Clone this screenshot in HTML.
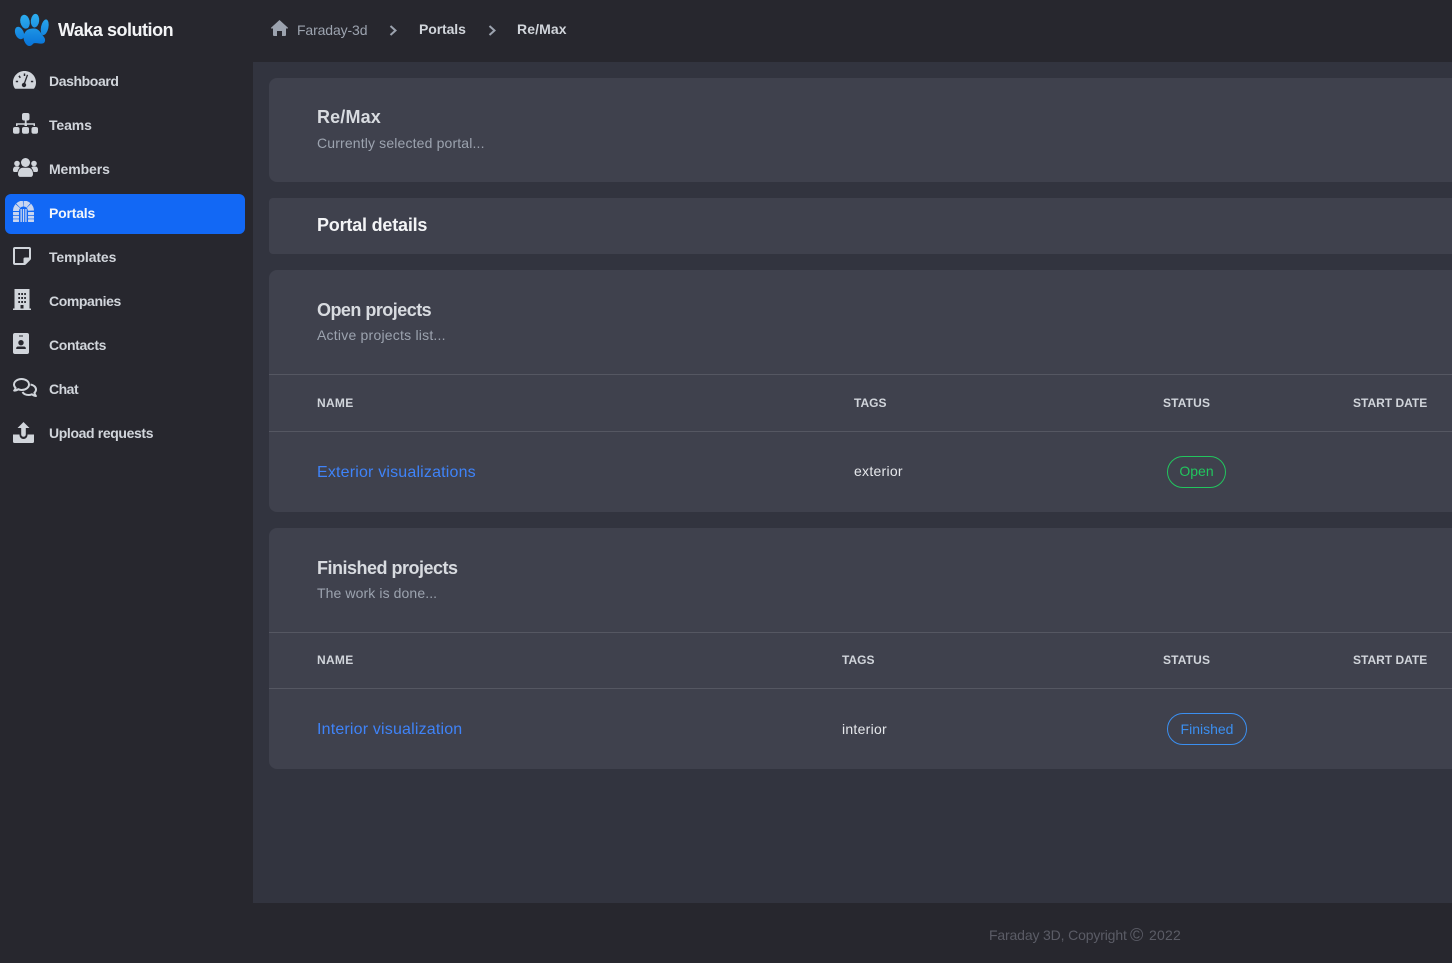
<!DOCTYPE html>
<html><head><meta charset="utf-8"><title>Waka solution</title>
<style>
html,body{margin:0;padding:0;background:#27272e;}
body{position:relative;width:1452px;height:963px;overflow:hidden;font-family:"Liberation Sans",Arial,sans-serif;color:#d1d5db;}
.a{position:absolute;white-space:nowrap;line-height:20px;}
.box{position:absolute;}
.card{position:absolute;left:269px;width:1183px;background:#3f414d;border-radius:8px 0 0 8px;}
.nav{font-size:14px;font-weight:700;left:49px;color:#d1d5db;}
.h{font-size:18px;font-weight:700;left:317px;color:#d8dbe0;}
.sub{font-size:14px;left:317px;color:#9ca3af;}
.th{font-size:12px;font-weight:700;color:#d1d5db;}
.hr{position:absolute;left:269px;width:1183px;height:1px;background:#555762;}
.lnk{font-size:16px;left:317px;color:#3f83f8;letter-spacing:.18px;}
.td{font-size:14px;color:#e5e7eb;letter-spacing:.27px;}
.pill{position:absolute;border-radius:16px;box-sizing:border-box;font-size:14px;text-align:center;line-height:29px;height:32px;}
svg{position:absolute;}
</style></head><body>

<div class="box" style="left:253px;top:62px;width:1199px;height:841px;background:#32343f;"></div>

<svg style="left:14px;top:13px" width="36" height="34" viewBox="0 0 36 34">
<defs><linearGradient id="g" gradientUnits="userSpaceOnUse" x1="0" y1="0" x2="0" y2="33"><stop offset="0" stop-color="#2fb0f0"/><stop offset="1" stop-color="#0873d8"/></linearGradient></defs>
<g fill="url(#g)">
<ellipse cx="5.500" cy="20" rx="4.200" ry="6.500" transform="rotate(-22 5.500 20)"/>
<ellipse cx="11" cy="8.700" rx="4.700" ry="7" transform="rotate(-12 11 8.700)"/>
<ellipse cx="21" cy="7.700" rx="4.200" ry="6.800" transform="rotate(6 21 7.700)"/>
<ellipse cx="30.700" cy="14.300" rx="3.700" ry="8" transform="rotate(12 30.700 14.300)"/>
<path d="M20 15.500c4 0 6 3 8 6 2 2.500 3.500 4 3 6.500-.5 2.500-3 3-6 2.500-2-.4-3.500-.6-5-.2-1.500.6-2 2.700-4.500 2.700-3 0-5.500-4-6-8-.3-3 1-5.500 3-7.500 2-1.500 4-2 7.500-2z"/>
</g></svg>
<div class="a" style="left:58px;top:20px;font-size:18px;font-weight:700;color:#f3f4f6;letter-spacing:-.48px;">Waka solution</div>

<div class="box" style="left:5px;top:194px;width:240px;height:40px;background:#1268f5;border-radius:6px;"></div>

<!-- dashboard -->
<svg style="left:13px;top:71px" width="23" height="18" viewBox="0 0 23 18"><path fill="#d1d5db" d="M11.500 0C5 0 0 5 0 11.500c0 2.200.6 4.200 1.700 5.700.2.300.5.500.9.500h17.800c.4 0 .7-.2.900-.5 1.100-1.500 1.700-3.500 1.700-5.700C23 5 18 0 11.500 0z"/><g stroke="#27272e" stroke-width="1.500" fill="none"><path d="M11.500 2.500v2.500M6 4.800l1.300 2M2.800 10.500h2.300M20.200 10.500h-2.300"/><path d="M11 13.500L14.500 3.800" stroke-width="1.300"/></g><circle cx="11" cy="14" r="2.200" fill="#27272e"/></svg>
<!-- teams -->
<svg style="left:13px;top:113px" width="25" height="21" viewBox="0 0 25 21"><g fill="#d1d5db"><rect x="9" width="7.500" height="7.500" rx="2"/><rect y="14" width="6.500" height="6.800" rx="2"/><rect x="9" y="14" width="7" height="6.800" rx="2"/><rect x="18.500" y="14" width="6.500" height="6.800" rx="2"/><path d="M11.800 7h1.800v3.200H22V13h-1.500v-1.300H14V13h-2.500v-1.300H4.500V13H3v-2.800h8.800z"/></g></svg>
<!-- members -->
<svg style="left:13px;top:158px" width="25" height="19" viewBox="0 0 25 19"><g fill="#d1d5db"><circle cx="12.500" cy="4.500" r="4.500"/><circle cx="4" cy="5.500" r="2.800"/><circle cx="21" cy="5.500" r="2.800"/><path d="M5 16c0-4 2.500-6.300 4.500-6.300h6C17.500 9.700 20 12 20 16c0 1.700-1 2.900-2 2.900H7c-1 0-2-1.200-2-2.900z"/><path d="M0 12c0-2 1-3.500 2.500-3.500h3c.7.500 1.100 1 1.300 1.300C5.400 11 4.700 12.500 4.500 14H1.200C.5 14 0 13.200 0 12zM25 12c0-2-1-3.500-2.500-3.500h-3c-.7.500-1.100 1-1.300 1.300 1.400 1.200 2.100 2.700 2.300 4.200h3.300c.7 0 1.200-.8 1.200-2z"/></g></svg>
<!-- portals -->
<svg style="left:13px;top:201px" width="21" height="21" viewBox="0 0 21 21"><path d="M3 10A7.500 7.500 0 0 1 18 10" fill="none" stroke="#c9d6f0" stroke-width="6" stroke-dasharray="5.300 .6"/><g fill="#c9d6f0"><rect y="11" width="6" height="3" rx=".5"/><rect y="14.800" width="6" height="2.800" rx=".5"/><rect y="18.300" width="6" height="2.700" rx=".5"/><rect x="15" y="11" width="6" height="3" rx=".5"/><rect x="15" y="14.800" width="6" height="2.800" rx=".5"/><rect x="15" y="18.300" width="6" height="2.700" rx=".5"/><rect x="7.500" y="8" width="1.300" height="13"/><rect x="9.900" y="8" width="1.300" height="13"/><rect x="12.300" y="8" width="1.300" height="13"/></g></svg>
<!-- templates -->
<svg style="left:13px;top:247px" width="18" height="18" viewBox="0 0 18 18"><path fill="#d1d5db" fill-rule="evenodd" d="M2 0h14a2 2 0 0 1 2 2v9.500c0 .5-.2 1-.6 1.400l-4.500 4.500c-.4.400-.9.600-1.400.6H2a2 2 0 0 1-2-2V2a2 2 0 0 1 2-2zm0 2v14h8.500v-4a1.500 1.500 0 0 1 1.500-1.500H16V2z"/></svg>
<!-- companies -->
<svg style="left:13px;top:289px" width="18" height="21" viewBox="0 0 18 21"><path fill="#d1d5db" fill-rule="evenodd" d="M1.500 0h15v19.500H18V21H0v-1.500h1.500zM5.300 4v2H7V4zm2.900 0v2H10V4zm3 0v2h1.700V4zM5.300 8v2H7V8zm2.900 0v2H10V8zm3 0v2h1.700V8zM5.300 12v2H7v-2zm2.900 0v2H10v-2zm3 0v2h1.700v-2zM7.500 16v3.500h3V16z"/></svg>
<!-- contacts -->
<svg style="left:13px;top:333px" width="16" height="21" viewBox="0 0 16 21"><path fill="#d1d5db" fill-rule="evenodd" d="M2 0h12a2 2 0 0 1 2 2v17a2 2 0 0 1-2 2H2a2 2 0 0 1-2-2V2a2 2 0 0 1 2-2zm4 2.500v1h4v-1zM8 7a2.700 2.700 0 1 0 0 5.400A2.700 2.700 0 0 0 8 7zm-3 6.500c-1 0-1.800.8-1.800 1.700v.8h9.600v-.8c0-.9-.8-1.700-1.800-1.700z"/></svg>
<!-- chat -->
<svg style="left:13px;top:378px" width="24" height="20" viewBox="0 0 24 20"><g fill="none" stroke="#d1d5db" stroke-width="2" stroke-linejoin="round"><path d="M8.500 1C4.400 1 1 3.500 1 6.500c0 1.300.6 2.500 1.600 3.400C2.400 11 1.800 12 1.200 12.600c1.500 0 3-.6 4-1.400 1 .5 2.100.8 3.300.8 4.100 0 7.500-2.400 7.500-5.500S12.600 1 8.500 1z"/><path d="M17.500 6.500C20.600 7 23 9 23 11.500c0 1.300-.6 2.400-1.600 3.300.2 1.200.9 2.300 1.500 3.200-1.600-.1-3-.8-4-1.700-1 .4-2 .7-3.200.7-2.800 0-5.200-1.200-6.200-3"/></g></svg>
<!-- upload -->
<svg style="left:13px;top:422px" width="21" height="21" viewBox="0 0 21 21"><path fill="#d1d5db" d="M10.500 0l6 6h-3.700v6.500a2.300 2.300 0 0 1-4.600 0V6H4.500zM0 12.500h6.500v.5a4 4 0 0 0 8 0v-.5H21v7A1.500 1.500 0 0 1 19.500 21h-18A1.500 1.500 0 0 1 0 19.500z"/></svg>

<div class="a nav" style="top:71px;letter-spacing:-.4px">Dashboard</div>
<div class="a nav" style="top:115px;letter-spacing:-.1px">Teams</div>
<div class="a nav" style="top:159px;letter-spacing:-.1px">Members</div>
<div class="a nav" style="top:203px;color:#f3f6fb;letter-spacing:-.2px">Portals</div>
<div class="a nav" style="top:247px;letter-spacing:-.1px">Templates</div>
<div class="a nav" style="top:291px;letter-spacing:-.4px">Companies</div>
<div class="a nav" style="top:335px;letter-spacing:-.35px">Contacts</div>
<div class="a nav" style="top:379px;letter-spacing:-.5px">Chat</div>
<div class="a nav" style="top:423px;letter-spacing:-.37px">Upload requests</div>

<!-- breadcrumb -->
<svg style="left:271px;top:20px" width="17" height="16" viewBox="0 0 17 16"><path fill="#9ca3af" d="M8.500 0L17 7.800c.2.300 0 .7-.4.700H15V15a1 1 0 0 1-1 1h-3v-5H6v5H3a1 1 0 0 1-1-1V8.500H.4C0 8.500-.2 8.100 0 7.800z"/></svg>
<div class="a" style="left:297px;top:20px;font-size:14px;color:#9ca3af;letter-spacing:-.12px">Faraday-3d</div>
<svg style="left:389px;top:25px" width="8" height="11" viewBox="0 0 8 11"><path fill="none" stroke="#9ca3af" stroke-width="2" d="M1.500 1l5 4.500-5 4.500"/></svg>
<div class="a" style="left:419px;top:19px;font-size:14px;font-weight:700;color:#d1d5db;letter-spacing:-.1px;">Portals</div>
<svg style="left:488px;top:25px" width="8" height="11" viewBox="0 0 8 11"><path fill="none" stroke="#9ca3af" stroke-width="2" d="M1.500 1l5 4.500-5 4.500"/></svg>
<div class="a" style="left:517px;top:19px;font-size:14px;font-weight:700;color:#d1d5db;letter-spacing:.1px;">Re/Max</div>

<!-- cards -->
<div class="card" style="top:78px;height:104px;"></div>
<div class="a h" style="top:107px;letter-spacing:.15px">Re/Max</div>
<div class="a sub" style="top:133px;letter-spacing:.15px">Currently selected portal...</div>

<div class="card" style="top:198px;height:56px;border-radius:4px 0 0 4px;"></div>
<div class="a" style="left:317px;top:215px;font-size:18px;font-weight:700;color:#f3f4f6;letter-spacing:-.2px;">Portal details</div>

<div class="card" style="top:270px;height:242px;"></div>
<div class="a h" style="top:300px;letter-spacing:-.53px">Open projects</div>
<div class="a sub" style="top:325px;letter-spacing:.22px">Active projects list...</div>
<div class="hr" style="top:374px"></div>
<div class="a th" style="left:317px;top:393px;letter-spacing:.3px">NAME</div>
<div class="a th" style="left:854px;top:393px;letter-spacing:0">TAGS</div>
<div class="a th" style="left:1163px;top:393px;letter-spacing:.15px">STATUS</div>
<div class="a th" style="left:1353px;top:393px;letter-spacing:0">START DATE</div>
<div class="hr" style="top:431px"></div>
<div class="a lnk" style="top:463px">Exterior visualizations</div>
<div class="a td" style="left:854px;top:461px">exterior</div>
<div class="pill" style="left:1167px;top:456px;width:59px;border:1px solid #22c55e;color:#22c55e;">Open</div>

<div class="card" style="top:528px;height:241px;"></div>
<div class="a h" style="top:558px;letter-spacing:-.5px">Finished projects</div>
<div class="a sub" style="top:583px;letter-spacing:.1px">The work is done...</div>
<div class="hr" style="top:632px"></div>
<div class="a th" style="left:317px;top:650px;letter-spacing:.3px">NAME</div>
<div class="a th" style="left:842px;top:650px;letter-spacing:0">TAGS</div>
<div class="a th" style="left:1163px;top:650px;letter-spacing:.15px">STATUS</div>
<div class="a th" style="left:1353px;top:650px;letter-spacing:0">START DATE</div>
<div class="hr" style="top:688px"></div>
<div class="a lnk" style="top:720px">Interior visualization</div>
<div class="a td" style="left:842px;top:719px">interior</div>
<div class="pill" style="left:1167px;top:713px;width:80px;border:1px solid #3b8ff0;color:#3b8ff0;line-height:30px;">Finished</div>

<!-- footer -->
<div class="a" style="left:989px;top:925px;font-size:14px;color:#5b5c66;letter-spacing:-.15px">Faraday 3D, Copyright</div>
<div class="a" style="left:1130px;top:925px;font-size:18px;color:#5b5c66;">©</div>
<div class="a" style="left:1149px;top:925px;font-size:14px;color:#5b5c66;letter-spacing:.2px">2022</div>
</body></html>
